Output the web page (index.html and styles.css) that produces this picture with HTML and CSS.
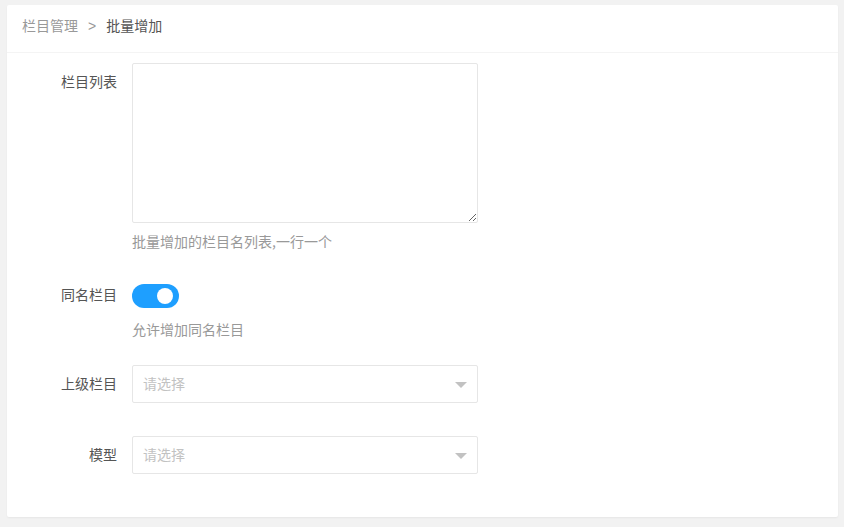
FILE: index.html
```html
<!DOCTYPE html>
<html lang="zh-CN">
<head>
<meta charset="utf-8">
<title>批量增加</title>
<link rel="stylesheet" href="styles.css">
</head>
<body>
<div class="card">
  <div class="card-header">
    <span class="crumb">栏目管理</span><span class="sep">&gt;</span><span class="crumb current">批量增加</span>
  </div>
  <div class="card-body">
    <div class="form-item">
      <label class="form-label">栏目列表</label>
      <div class="input-block">
        <textarea class="textarea"></textarea>
      </div>
    </div>
    <div class="form-help help-first">批量增加的栏目名列表,一行一个</div>

    <div class="form-item">
      <label class="form-label">同名栏目</label>
      <div class="input-block">
        <div class="switch"><span class="knob"></span></div>
      </div>
    </div>
    <div class="form-help help-second">允许增加同名栏目</div>

    <div class="form-item">
      <label class="form-label">上级栏目</label>
      <div class="input-block">
        <div class="select"><span class="placeholder">请选择</span><span class="arrow"></span></div>
      </div>
    </div>

    <div class="form-item item-model">
      <label class="form-label">模型</label>
      <div class="input-block">
        <div class="select"><span class="placeholder">请选择</span><span class="arrow"></span></div>
      </div>
    </div>
  </div>
</div>
</body>
</html>
```

FILE: styles.css
```css
* { box-sizing: border-box; }
html, body {
  margin: 0;
  padding: 0;
  background: #f2f2f2;
}
body {
  padding: 5px 6px 10px 7px;
  font-family: "Noto Sans CJK SC", "Noto Sans", sans-serif;
  font-size: 14px;
  color: #666;
}
.card {
  background: #fff;
  border-radius: 2px;
  box-shadow: 0 1px 2px 0 rgba(0,0,0,0.05);
}
.card-header {
  height: 48px;
  line-height: 40px;
  padding: 0 15px;
  border-bottom: 1px solid #f4f4f4;
}
.crumb { color: #999; }
.crumb.current { color: #555; }
.sep {
  color: #999;
  margin: 0 10px;
  font-family: "Liberation Sans", sans-serif;
}
.card-body {
  padding: 10px 15px 43px;
}
.form-item {
  display: flex;
  align-items: flex-start;
}
.form-label {
  width: 110px;
  flex: none;
  padding: 8px 15px 10px;
  line-height: 20px;
  text-align: right;
  color: #555;
}
.input-block {
  width: 346px;
}
.textarea {
  display: block;
  width: 346px;
  height: 160px;
  border: 1px solid #e6e6e6;
  border-radius: 2px;
  padding: 6px 10px;
  resize: vertical;
  outline: none;
  font: inherit;
}
.form-help {
  margin-left: 110px;
  line-height: 20px;
  color: #999;
}
.help-first {
  padding: 8px 0 10px;
  margin-bottom: 15px;
}
.help-second {
  padding: 5px 0 10px;
  margin-bottom: 16px;
}
.switch {
  position: relative;
  margin-top: 8px;
  width: 47px;
  height: 24px;
  border-radius: 20px;
  background: #1e9fff;
}
.knob {
  position: absolute;
  right: 6px;
  top: 4px;
  width: 16px;
  height: 16px;
  border-radius: 50%;
  background: #fff;
}
.select {
  position: relative;
  height: 38px;
  border: 1px solid #e6e6e6;
  border-radius: 2px;
  padding: 0 10px;
  line-height: 34px;
}
.placeholder { color: #c2c2c2; }
.arrow {
  position: absolute;
  right: 10px;
  top: 16px;
  width: 0;
  height: 0;
  border-left: 6px solid transparent;
  border-right: 6px solid transparent;
  border-top: 6px solid #c2c2c2;
}
.item-model {
  margin-top: 33px;
}
```
